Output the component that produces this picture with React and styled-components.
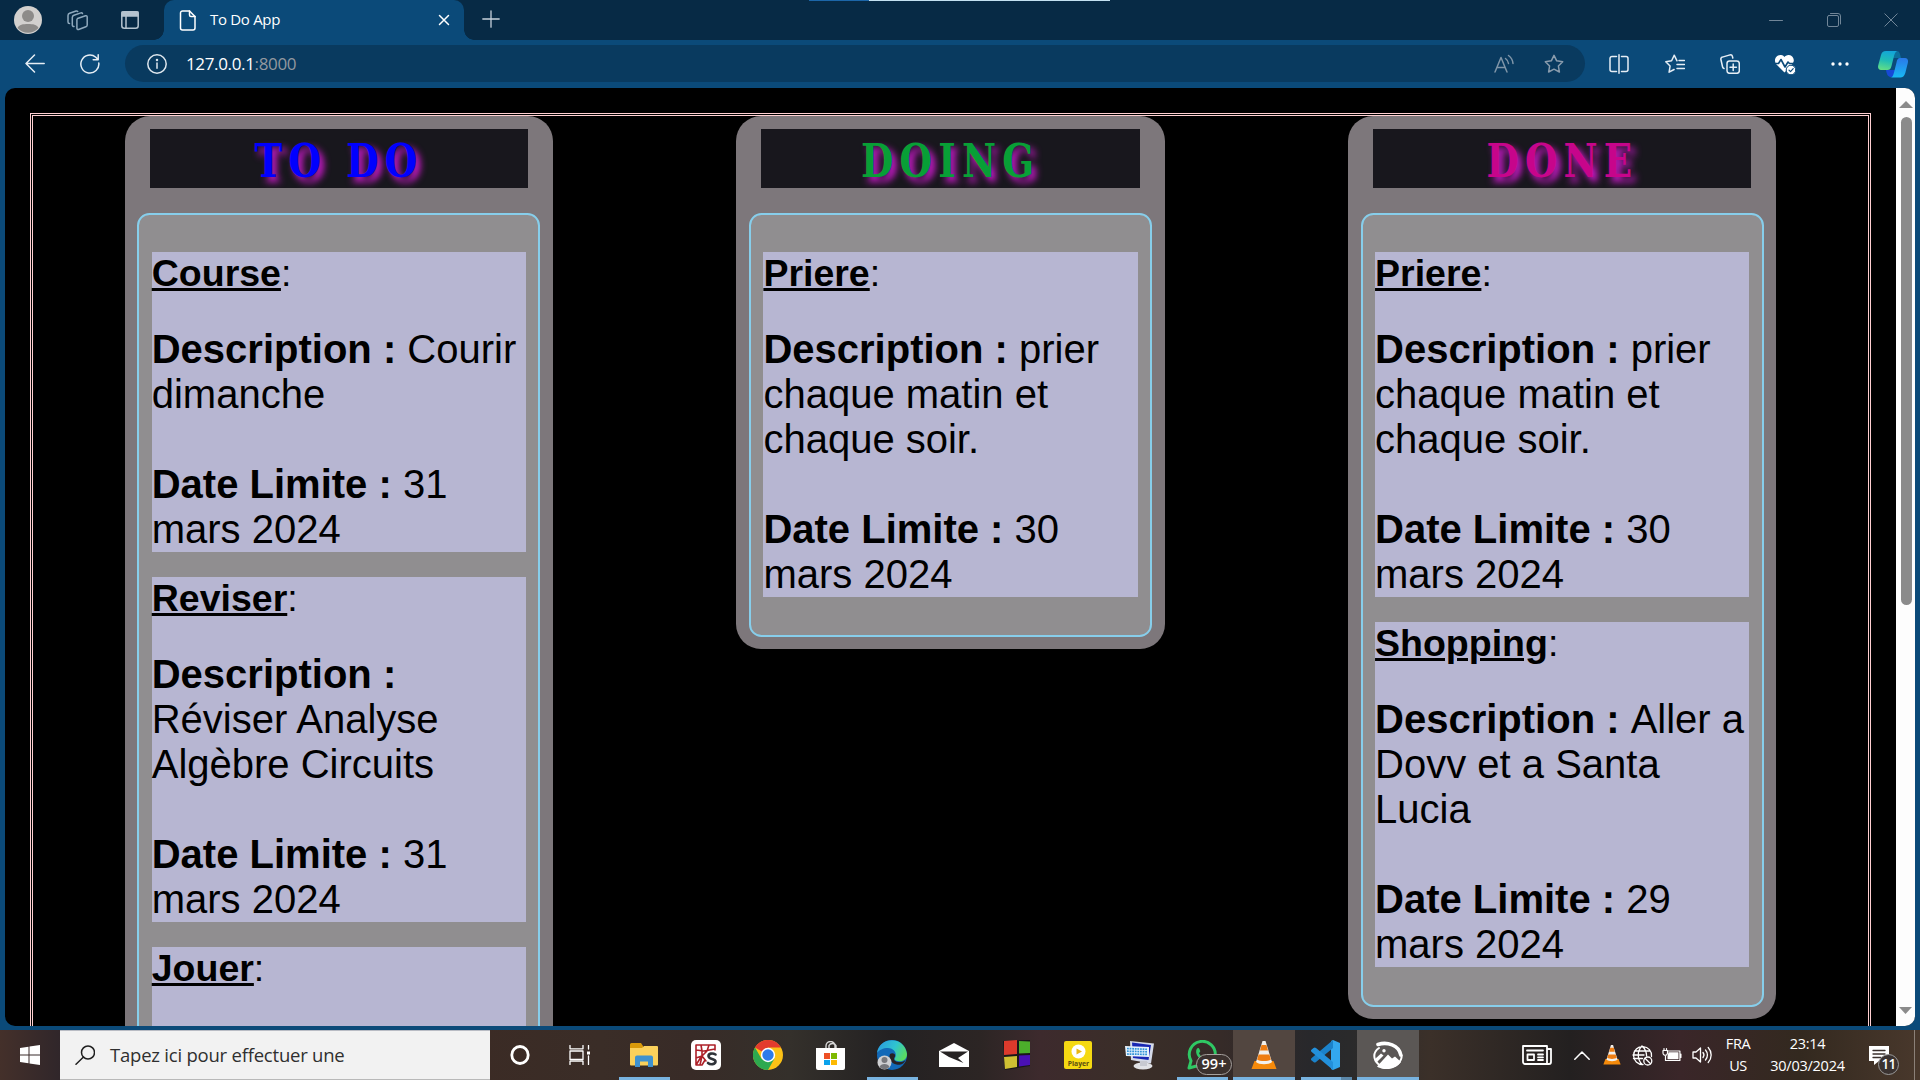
import React from "react";
import styled, { createGlobalStyle } from "styled-components";

const Global = createGlobalStyle`
  * { box-sizing: border-box; }
  body { margin: 0; background: #0b4a79; overflow: hidden; }
`;

const ui = `"Segoe UI", "Open Sans", "Noto Sans", sans-serif`;

const Screen = styled.div`
  width: 1920px;
  height: 1080px;
  display: flex;
  flex-direction: column;
  overflow: hidden;
  background: #0b4a79;
  font-family: ${ui};
`;

/* ---------- browser chrome ---------- */

const TabStrip = styled.header`
  height: 40px;
  flex: none;
  display: flex;
  position: relative;
  background: #072a45;
`;

const LoadLine = styled.div`
  position: absolute;
  top: 0;
  left: 809px;
  width: 301px;
  height: 1px;
  background: linear-gradient(90deg, #1c66a8 0 60px, #c4e2f2 60px);
`;

const StripTools = styled.div`
  width: 164px;
  padding-left: 14px;
  display: flex;
  align-items: center;
  gap: 25px;
`;

const StripIcon = styled.div`
  margin-left: ${(p) => p.$gap || 0}px;
`;

const Tab = styled.div`
  position: relative;
  width: 300px;
  height: 40px;
  padding: 0 14px 0 15px;
  display: flex;
  align-items: center;
  background: #0b4a79;
  border-radius: 10px 10px 0 0;
  color: #fff;
  &::before, &::after {
    content: "";
    position: absolute;
    bottom: 0;
    width: 10px;
    height: 10px;
  }
  &::before {
    left: -10px;
    background: radial-gradient(circle at 0 0, transparent 9.5px, #0b4a79 10px);
  }
  &::after {
    right: -10px;
    background: radial-gradient(circle at 100% 0, transparent 9.5px, #0b4a79 10px);
  }
`;

const TabTitle = styled.span`
  flex: 1;
  margin-left: 14px;
  padding-bottom: 2px;
  font-size: 15px;
  line-height: 20px;
  letter-spacing: -0.3px;
`;

const NewTab = styled.div`
  width: 54px;
  padding-bottom: 2px;
  display: flex;
  align-items: center;
  justify-content: center;
`;

const WindowButtons = styled.div`
  margin-left: auto;
  padding-bottom: 1px;
  display: flex;
`;

const WindowButton = styled.div`
  width: 57.5px;
  display: flex;
  align-items: center;
  justify-content: center;
`;

const Toolbar = styled.div`
  height: 48px;
  flex: none;
  display: flex;
  align-items: center;
  background: #0b4a79;
`;

const ToolSlot = styled.div`
  width: ${(p) => p.$w}px;
  padding-right: ${(p) => p.$pr || 0}px;
  flex: none;
  display: flex;
  align-items: center;
  justify-content: center;
`;

const AddressBar = styled.div`
  width: 1460px;
  height: 37px;
  margin: 0 6px 1px 10px;
  padding: 0 6px 0 22px;
  display: flex;
  align-items: center;
  border-radius: 19px;
  background: #093a5f;
`;

const Url = styled.div`
  flex: 1;
  margin-left: 19px;
  font-size: 17px;
  line-height: 24px;
  letter-spacing: -0.35px;
  color: #fff;
  span { color: #93989f; }
`;

/* ---------- page ---------- */

const Viewport = styled.main`
  height: 938px;
  flex: none;
  margin: 0 5px;
  display: flex;
  overflow: hidden;
  border-radius: 10px;
  background: #000;
`;

const Page = styled.div`
  width: 1891px;
  padding: 25px 25px 0;
`;

const Board = styled.div`
  display: flex;
  justify-content: space-around;
  align-items: flex-start;
  height: 1400px;
  border: 3px double #ffd0d2;
`;

const Column = styled.section`
  width: 428.2px;
  padding: 12.5px;
  border-radius: 25px;
  background: #7d777b;
`;

const Heading = styled.h1`
  height: 59px;
  margin: 0 12.5px 25px;
  padding-top: 2px;
  overflow: hidden;
  text-align: center;
  background: #18171d;
  font: bold 46.5px/59px "DejaVu Serif Condensed", "DejaVu Serif", serif;
  font-stretch: condensed;
  color: ${(p) => p.$color};
`;

const HeadingText = styled.span`
  display: inline-block;
  transform: scaleX(0.89);
  letter-spacing: 7px;
  text-shadow: 5px 5px 8px #d41ad4;
`;

const Tasks = styled.div`
  padding: 37.5px 12.5px;
  display: flex;
  flex-direction: column;
  gap: 25px;
  border: 2px solid #87ceeb;
  border-radius: 12.5px;
  background: #908e90;
`;

const Card = styled.article`
  min-height: ${(p) => p.$min || 0}px;
  background: #b7b6d2;
  color: #000;
  font-family: Arial, "Liberation Sans", sans-serif;
`;

const CardTitle = styled.div`
  margin-bottom: 32px;
  font-size: 37.5px;
  line-height: 43px;
`;

const Line = styled.p`
  margin: 0 0 ${(p) => (p.$last ? 0 : 45)}px;
  font-size: 40px;
  line-height: 45px;
`;

const ScrollBar = styled.div`
  width: 19px;
  padding: 13px 0 12px;
  display: flex;
  flex-direction: column;
  align-items: center;
  background: #fdfdfd;
`;

const Thumb = styled.div`
  width: 11px;
  height: 488px;
  margin: 9px 0 auto 1px;
  border-radius: 6px;
  background: #8b8b8b;
`;

/* ---------- taskbar ---------- */

const Taskbar = styled.footer`
  height: 50px;
  flex: none;
  margin-top: 4px;
  display: flex;
  background: linear-gradient(90deg, #44302a 0, #30262a 60px, #3b2b25 480px, #3a2d27 600px,
    #382b27 690px, #34302b 790px, #232122 890px, #2c2524 980px, #3d2a2d 1040px, #3a2e28 1130px,
    #362b28 1220px, #28282b 1310px, #2a2a2b 1350px, #3b3029 1430px, #232020 1570px,
    #3a2629 1680px, #33291f 1800px, #49382c 1920px);
`;

const Start = styled.div`
  width: 60px;
  display: flex;
  align-items: center;
  justify-content: center;
`;

const Search = styled.div`
  width: 430px;
  padding: 0 15px;
  display: flex;
  align-items: center;
  gap: 15px;
  border-top: 1px solid #b9bcc4;
  border-bottom: 1px solid #b9b9b9;
  background: #f2f2f2;
  color: #2f2f2f;
  font-size: 18.5px;
  letter-spacing: -0.22px;
  span { padding-bottom: 2px; }
`;

const Cell = styled.div`
  position: relative;
  width: ${(p) => p.$w || 62}px;
  padding-right: ${(p) => p.$pr || 0}px;
  display: flex;
  align-items: center;
  justify-content: center;
  background: ${(p) => p.$bg || "transparent"};
  &::after {
    content: "";
    position: absolute;
    bottom: 0;
    left: ${(p) => (p.$bg ? 0 : 6)}px;
    right: ${(p) => (p.$bg ? 0 : 5)}px;
    height: ${(p) => (p.$open ? 3 : 0)}px;
    background: ${(p) => (p.$stack ? "linear-gradient(90deg, #78b3e0 0 40px, #5b87a9 40px)" : "#78b3e0")};
  }
`;

const Count = styled.div`
  position: absolute;
  left: 25px;
  top: 24px;
  width: 36px;
  height: 21px;
  border: 1px solid #a5a09d;
  border-radius: 11px;
  background: #3b312e;
  color: #fff;
  font: 600 14.5px/18px ${ui};
  text-align: center;
`;

const Tray = styled.div`
  margin-left: auto;
  display: flex;
  color: #fff;
`;

const TraySlot = styled.div`
  position: relative;
  width: ${(p) => p.$w}px;
  padding-right: ${(p) => p.$pr || 0}px;
  display: flex;
  flex-direction: column;
  align-items: center;
  justify-content: center;
  font-size: 14.5px;
  line-height: 22px;
  letter-spacing: ${(p) => p.$ls || 0}px;
  white-space: nowrap;
`;

const Badge = styled.div`
  position: absolute;
  left: 22px;
  top: 24px;
  width: 21px;
  height: 21px;
  border: 1px solid #9a9a9a;
  border-radius: 50%;
  background: #3a3230;
  font: 600 13.5px/18px ${ui};
  text-align: center;
  letter-spacing: -0.8px;
`;

const ShowDesktop = styled.div`
  width: 6px;
  border-left: 1px solid #8b8078;
`;

/* ---------- drawings ---------- */

const Drawing = styled.svg`
  display: block;
  flex: none;
`;

const Ic = ({ w = 20, h = w, vb, c = "#e6eef5", s = 1.5, children }) => (
  <Drawing width={w} height={h} viewBox={vb || `0 0 ${w} ${h}`} fill="none" stroke={c} strokeWidth={s}
    strokeLinecap="round" strokeLinejoin="round">
    {children}
  </Drawing>
);

const Avatar = () => (
  <Ic w={28} s={0}>
    <circle cx="14" cy="14" r="14" fill="#d2d0ce" />
    <circle cx="14" cy="10" r="6" fill="#8d8b89" />
    <path d="M3.5 22C5 18.5 9 18 14 18s9 .5 10.500 4A14 14 0 0 1 3.500 22z" fill="#8d8b89" />
  </Ic>
);

const Cone = ({ w, h }) => (
  <Ic w={w} h={h} vb="0 0 26 28" s={0}>
    <path d="M3.500 20h19l3 8H.5z" fill="#f58a0b" />
    <path d="M11.500 0h3l6.500 21c-3 3-13 3-16 0z" fill="#f2f0ec" />
    <path d="M10.500 4h5l1.500 5.500H9z" fill="#ee7d12" />
    <path d="M7.600 13.500h10.800l1.500 5c-3 2-10.800 2-13.800 0z" fill="#ee7d12" />
  </Ic>
);

const UpArrow = () => <Ic w={14} h={7} s={0}><path d="M7 0l7 7H0z" fill="#8b8b8b" /></Ic>;
const DownArrow = () => <Ic w={13} h={7} s={0}><path d="M6.500 7L0 0h13z" fill="#8b8b8b" /></Ic>;

const starPath = "M10 1.300l2.700 5.500 6 .9-4.300 4.300 1 6L10 15.200 4.600 18l1-6L1.300 7.700l6-.9z";

/* ---------- data ---------- */

const columns = [
  { title: "TO DO", color: "#0000ff", tasks: [
    { name: "Course", text: "Courir dimanche", date: "31 mars 2024" },
    { name: "Reviser", text: "Réviser Analyse Algèbre Circuits", date: "31 mars 2024" },
    { name: "Jouer" },
  ] },
  { title: "DOING", color: "#089f36", tasks: [
    { name: "Priere", text: "prier chaque matin et chaque soir.", date: "30 mars 2024" },
  ] },
  { title: "DONE", color: "#c7058b", tasks: [
    { name: "Priere", text: "prier chaque matin et chaque soir.", date: "30 mars 2024" },
    { name: "Shopping", text: "Aller a Dovv et a Santa Lucia", date: "29 mars 2024" },
  ] },
];

const Task = ({ name, text, date }) => (
  <Card $min={text ? 0 : 300}>
    <CardTitle><b><u>{name}</u></b>:</CardTitle>
    {text && <Line><b>{"Description : "}</b>{text}</Line>}
    {date && <Line $last><b>{"Date Limite : "}</b>{date}</Line>}
  </Card>
);

const Chrome = () => (
  <>
    <TabStrip>
      <StripTools>
        <Avatar />
        <StripIcon>
          <Ic w={21} c="#8fa9bd">
            <path d="M10.500 8.500l8-2.800a1.300 1.300 0 0 1 1.700 1.200v8a2 2 0 0 1-1.300 1.900l-7.300 2.700a1.300 1.300 0 0 1-1.700-1.200v-8a2 2 0 0 1 .6-1.800z" />
            <path d="M7 16.500a1.500 1.500 0 0 1-1.700-1.500V7.500a2.500 2.500 0 0 1 1.600-2.200l7-2.400a1.400 1.400 0 0 1 1.600.6" />
            <path d="M2.500 13.500A1.500 1.500 0 0 1 1 12V5.500a2.500 2.500 0 0 1 1.600-2.200l6.500-2.300a1.400 1.400 0 0 1 1.600.5" />
          </Ic>
        </StripIcon>
        <StripIcon $gap={8}>
          <Ic w={18} c="#b4c3cf">
            <rect x=".8" y=".8" width="16.400" height="16.400" rx="2.500" />
            <path d="M1 1h16v4H1z" fill="#b4c3cf" />
            <path d="M5 5v12" />
          </Ic>
        </StripIcon>
      </StripTools>
      <Tab>
        <Ic w={17} h={21} c="#fff">
          <path d="M3.500 1h7L16 6.500V18a2 2 0 0 1-2 2H3.500a2 2 0 0 1-2-2V3a2 2 0 0 1 2-2z" />
          <path d="M10.500 1v4a1.500 1.500 0 0 0 1.500 1.500h4" />
        </Ic>
        <TabTitle>To Do App</TabTitle>
        <Ic w={12} c="#fff"><path d="M1.500 1.500l9 9M10.500 1.500l-9 9" /></Ic>
      </Tab>
      <NewTab><Ic w={18} c="#c7d2dc" s={1.300}><path d="M9 .8v16.400M.8 9h16.400" /></Ic></NewTab>
      <LoadLine />
      <WindowButtons>
        <WindowButton><Ic w={14} c="#718698" s={1}><path d="M.5 7.500h13" /></Ic></WindowButton>
        <WindowButton>
          <Ic w={14} c="#718698" s={1}>
            <rect x=".5" y="2.500" width="11" height="11" rx="1.500" />
            <path d="M3.500.5h7.500a2.500 2.500 0 0 1 2.500 2.500v8" />
          </Ic>
        </WindowButton>
        <WindowButton><Ic w={14} c="#718698" s={1}><path d="M.8.8l12.400 12.400M13.200.8L.8 13.200" /></Ic></WindowButton>
      </WindowButtons>
    </TabStrip>
    <Toolbar>
      <ToolSlot $w={70}><Ic w={20}><path d="M19.200 9.500H1M9.500 1L1 9.500 9.500 18" /></Ic></ToolSlot>
      <ToolSlot $w={45} $pr={5}>
        <Ic w={20}><path d="M18.800 9a9 9 0 1 1-3-5.700l1.700 1.800M18.200.8v5h-5" /></Ic>
      </ToolSlot>
      <AddressBar>
        <Ic w={20} c="#dfe7ee">
          <circle cx="10" cy="10" r="9.200" /><path d="M10 9v5.300" /><circle cx="10" cy="6" r=".5" fill="#fff" />
        </Ic>
        <Url>127.0.0.1<span>:8000</span></Url>
        <ToolSlot $w={50}>
          <Ic w={20} c="#7f95a8">
            <path d="M1 18L7 3.500 13 18M3 13.500h8M11.500 4.500a7 7 0 0 1 3 5M14.500 1.500a11 11 0 0 1 4.500 8" />
          </Ic>
        </ToolSlot>
        <ToolSlot $w={50}><Ic w={20} c="#8a9cad"><path d={starPath} /></Ic></ToolSlot>
      </AddressBar>
      <ToolSlot $w={56}>
        <Ic w={20}><path d="M7.500 2.500H3a2 2 0 0 0-2 2v11a2 2 0 0 0 2 2h4.500M12.500 2.500H17a2 2 0 0 1 2 2v11a2 2 0 0 1-2 2h-4.500M10 .8v18.400" /></Ic>
      </ToolSlot>
      <ToolSlot $w={55}>
        <Ic w={20}><path d="M12 6.800L9.200 1.200 6.600 6.800l-5.800.9 4.300 4.300-1 6.200 5-2.700M14 6.500h5.500M12 10.500h7.500M12 14.500h7.500" /></Ic>
      </ToolSlot>
      <ToolSlot $w={55}>
        <Ic w={20}>
          <rect x="7" y="7" width="12.300" height="12.300" rx="2.500" />
          <path d="M13.200 10v6.400M10 13.200h6.400M4 14.500a2 2 0 0 1-1.400-1.500L.9 5.500a2 2 0 0 1 1.500-2.400L10 .9a2 2 0 0 1 2.400 1.400l.4 1.700" />
        </Ic>
      </ToolSlot>
      <ToolSlot $w={55}>
        <Ic w={22} h={21} c="#fff" s={0}>
          <path d="M10.500 18.500L2 10C-1 5 3 .5 7 1c2 0 3 1.500 3.500 2C11 2 13 .8 15 1c4 .5 6.500 5 3.500 9z" fill="#fff" />
          <path d="M0 9.500h4.500L7 5.500l4 7.500 3-5 1.500 1.500H21" stroke="#0b4a79" strokeWidth="1.600" />
          <circle cx="17" cy="16" r="4.800" fill="#fff" stroke="#0b4a79" strokeWidth="1" />
          <path d="M15 16.200l1.500 1.500 2.700-3" stroke="#0b4a79" strokeWidth="1.200" />
        </Ic>
      </ToolSlot>
      <ToolSlot $w={55}>
        <Ic w={18} h={4} s={0}><path d="M2 2h.01M9 2h.01M16 2h.01" stroke="#fff" strokeWidth="3.400" /></Ic>
      </ToolSlot>
      <ToolSlot $w={51}>
        <Ic w={30} h={27} s={0}>
          <defs>
            <linearGradient id="cpa" x1=".5" y1="0" x2=".3" y2="1"><stop offset="0" stopColor="#13a5d8" /><stop offset=".5" stopColor="#20bdb5" /><stop offset="1" stopColor="#63de86" /></linearGradient>
            <linearGradient id="cpb" x1=".5" y1="0" x2=".5" y2="1"><stop offset="0" stopColor="#2a78e8" /><stop offset="1" stopColor="#19b9f3" /></linearGradient>
          </defs>
          <path d="M8 19h10l-2 7h-3c-3 0-4-2-5-7z" fill="#1749d6" />
          <path d="M15 0h4c2.500 0 3 3 4 7h-9z" fill="#0c6f9c" />
          <path d="M8 0h11c-2 1-2.500 3-3.500 7l-2 8c-.8 3-2 4-4 4H3c-2.500 0-3.500-2-2.700-5L3 4C4 1 5 0 8 0z" fill="url(#cpa)" />
          <path d="M22 7h5c2.500 0 3.500 2 2.800 5l-2.500 10c-1 3-2.500 4.500-5 4.500H12c2.500 0 3.200-2 4-5l2.500-10C19 8.500 20 7 22 7z" fill="url(#cpb)" />
        </Ic>
      </ToolSlot>
    </Toolbar>
  </>
);

const Apps = () => (
  <>
    <Cell $w={60}><Ic w={20} h={20} c="#fff" s={2.800}><ellipse cx="10" cy="10" rx="8.200" ry="8.500" /></Ic></Cell>
    <Cell $w={63} $pr={3}>
      <Ic w={22} h={20} c="#fff" s={1.300}>
        <path d="M1 .5v3.300h13V.5M1 19.500v-3.300h13v3.300M1 6h13v8.500H1zM19.500.5V4M19.500 11v8.500" />
        <path d="M18 6.500h3v3h-3z" fill="#fff" stroke="none" />
      </Ic>
    </Cell>
    <Cell $open>
      <Ic w={28} h={24} s={0}>
        <path d="M0 1.500A1.500 1.500 0 0 1 1.500 0H11l2 3v5H0z" fill="#d99a0a" />
        <path d="M0 5h12l2-2h13a1 1 0 0 1 1 1v17.500a1 1 0 0 1-1 1H1a1 1 0 0 1-1-1z" fill="#fbd15b" />
        <path d="M5 24v-9.500a2 2 0 0 1 2-2h14a2 2 0 0 1 2 2V24h-5v-5.500h-8V24z" fill="#3f92cf" />
      </Ic>
    </Cell>
    <Cell>
      <Ic w={30} s={1.600} c="#ad2028">
        <rect width="30" height="30" rx="5" fill="#fff" stroke="none" />
        <path d="M5 5h19v5M5 5v20h6l3-5M5 10l8 1 11-2M5 18l6-2 5-5 2-6M10 5l1 6v5l-2 9M11 16l4 5M5 25l5-8" />
        <path d="M24.500 14.500c-3-1.800-7-1-7 1.500 0 3.800 7 2 7 5.500 0 3-5 3.500-7.500 1.500" stroke="#30343a" strokeWidth="2.600" />
      </Ic>
    </Cell>
    <Cell>
      <Ic w={30} s={0}>
        <circle cx="15" cy="15" r="15" fill="#fbc116" />
        <path d="M15 15L2 7.500A15 15 0 0 1 28 7.500H15z" fill="#e33b2e" />
        <path d="M2 7.500A15 15 0 0 0 15 30l6.500-11.500L15 15l-6.500 3.800z" fill="#2da94f" />
        <circle cx="15" cy="15" r="7.200" fill="#fff" /><circle cx="15" cy="15" r="5.700" fill="#2d7bea" />
      </Ic>
    </Cell>
    <Cell>
      <Ic w={29} h={29} s={0}>
        <path d="M10 8V5a4.500 4.500 0 0 1 9 0v3M13 7V4.500a4 4 0 0 1 7 0V7" stroke="#d7d7d7" strokeWidth="1.400" />
        <path d="M0 7h29v20a2 2 0 0 1-2 2H2a2 2 0 0 1-2-2z" fill="#fff" />
        <path d="M8 12h6v6H8z" fill="#ee5024" /><path d="M15 12h6v6h-6z" fill="#7db900" />
        <path d="M8 19h6v5H8z" fill="#0aa2ec" /><path d="M15 19h6v5h-6z" fill="#fdb902" />
      </Ic>
    </Cell>
    <Cell $open>
      <Ic w={30} s={0}>
        <defs>
          <linearGradient id="eg" x1="0" x2="1" y1=".2" y2=".6"><stop offset="0" stopColor="#2b9be0" /><stop offset=".55" stopColor="#2fc4d0" /><stop offset="1" stopColor="#5bdc5e" /></linearGradient>
        </defs>
        <circle cx="15" cy="15" r="15" fill="#1269b8" />
        <path d="M0 13C2-3 27-5 30 14c0 6-5 8-9 7-4-.5-4-2-2.500-4C20 12 16 8 11 8 6 8 2 10 0 13z" fill="url(#eg)" />
        <path d="M13 14c2-1.500 6-.5 5 2.500-2 3-.5 5 3 5.500 3 .3 5 0 7.500-2-2 5-6 5-9 4.500-5-.8-8.500-6-6.500-10.500z" fill="#272224" />
        <circle cx="7.500" cy="22.500" r="7" fill="#cfd0d2" />
        <circle cx="7.500" cy="20" r="3" fill="#77787c" /><path d="M2.500 27c1-4 9-4 10 0-3 3-7 3-10 0z" fill="#77787c" />
      </Ic>
    </Cell>
    <Cell>
      <Ic w={30} h={24} s={0}>
        <path d="M0 8L15 0l15 8v16H0z" fill="#fff" /><path d="M1 8.500h28l-10 6.500 5.500 5L10 14z" fill="#262223" />
      </Ic>
    </Cell>
    <Cell>
      <Ic w={27} h={30} s={0}>
        <path d="M0 1L27 0v26L2 30z" fill="#19171a" />
        <path d="M1 1l13-1v14L1 15z" fill="#dc3a2c" /><path d="M16 1l11 .5V13l-11 .5z" fill="#4cae2b" />
        <path d="M1 17l13-1v11L2 29z" fill="#cfc033" /><path d="M16 15.500L27 15v10l-11 1.500z" fill="#4a10b4" />
      </Ic>
    </Cell>
    <Cell $pr={1}>
      <Ic w={28} s={0}>
        <rect width="28" height="28" rx="2" fill="#f5d912" />
        <circle cx="14.500" cy="10.500" r="7" fill="#fff" /><path d="M12.500 7.500l5.500 3-5.500 3z" fill="#e9b713" />
        <text x="14.500" y="24.500" textAnchor="middle" fontSize="6.800" fontWeight="700" fill="#5a4b10" fontFamily="Open Sans, sans-serif">Player</text>
      </Ic>
    </Cell>
    <Cell>
      <Ic w={30} h={29} s={0}>
        <path d="M5 0l24 2.500-3 20L6 19z" fill="#d5dae8" /><path d="M7 1.500l19 2.500-2.500 15L8 17z" fill="#1827b3" />
        <ellipse cx="18" cy="25" rx="9.500" ry="3.500" fill="#e1e2e6" /><path d="M15 20h7v5h-7z" fill="#c7c9d1" />
        <path d="M0 5l24 1v10L1 15z" fill="#e7f3fc" />
        <path d="M2 7.500l20 .8M2 10.200l20 .6M2 13l20 .4" stroke="#3192d8" strokeWidth="1.700" strokeDasharray="1.800 .8" strokeLinecap="butt" />
      </Ic>
    </Cell>
    <Cell $open>
      <Ic w={30} c="#2fc864" s={3}>
        <path d="M2 28l2-7.200A13 13 0 1 1 9.500 26z" />
        <path d="M10 8.500c1-1 2-.5 2.500.8l.8 2-1.300 2c1.500 3 3.500 4 5 4.700l2-2 3.200 1.700c.5 3-3 4-5 3.500C12 20 7 13 10 8.500z" fill="#2fc864" stroke="none" />
      </Ic>
      <Count>99+</Count>
    </Cell>
    <Cell $open $bg="#524640"><Cone w={26} h={28} /></Cell>
    <Cell $open $stack>
      <Ic w={30} s={0}>
        <path d="M22 0l7 3v24l-7 3-2-1V1z" fill="#33a7ee" />
        <path d="M22 0v8L5 22c-1 .7-1.500.7-2.500 0L.7 20.500c-1-.8-1-1.500 0-2.400z" fill="#1b82ca" />
        <path d="M22 30v-8L5 8c-1-.7-1.500-.7-2.500 0L.7 9.500c-1 .8-1 1.500 0 2.400z" fill="#2390db" />
      </Ic>
    </Cell>
    <Cell $open $bg="#5b5755">
      <Ic w={30} h={28} s={0}>
        <path d="M6 7C3 9 1.300 11.500 1.300 15c0 6 6 11.500 13.700 11.500S28.700 21 28.700 14.500" stroke="#fff" strokeWidth="2" />
        <path d="M5 3.500C14 .5 26 4 27.800 14" stroke="#fff" strokeWidth="3.600" />
        <path d="M4 25.500L15 13.500l4 4 3-2 6 5.500c-6 8-17 9-24 4.500z" fill="#fff" />
        <path d="M2 18l6-5.500 2.500 2L4 21z" fill="#fff" />
        <circle cx="11" cy="9.800" r="1.700" fill="#fff" />
      </Ic>
    </Cell>
  </>
);

const SystemTray = () => (
  <Tray>
    <TraySlot $w={54}>
      <Ic w={30} h={20} c="#fff" s={1.800}>
        <path d="M1 1h24v18H3a2 2 0 0 1-2-2zM25 4h4v13a2 2 0 0 1-2 2h-3M5 5.500h16M5.500 9.500h6.500v5.500H5.500zM16 9.500h5M16 12.300h5M16 15h5" />
      </Ic>
    </TraySlot>
    <TraySlot $w={36}><Ic w={16} h={9} c="#fff" s={1.500}><path d="M.8 8.300L8 1l7.200 7.300" /></Ic></TraySlot>
    <TraySlot $w={26} $pr={2}><Cone w={18} h={19.500} /></TraySlot>
    <TraySlot $w={32}>
      <Ic w={21} c="#fff" s={1.300}>
        <path d="M11 19.500a9 9 0 1 1 8.500-8M10 1c-5 5-5 13 0 18.500M10 1c3.500 3 4.500 6 4.600 10M2.500 6h15M1.500 13.500h9M1 10h11" />
        <circle cx="15.800" cy="16" r="4" /><path d="M13 13.300l5.600 5.400" />
      </Ic>
    </TraySlot>
    <TraySlot $w={29} $pr={2}>
      <Ic w={20} h={14} c="#fff" s={1.200}>
        <path d="M5.500 3h12.400v9.500H3.500V8M18.900 6v3.500" />
        <path d="M6.500 4.300h10v7h-11V8z" fill="#fff" stroke="none" />
        <path d="M1 2.500h4.500V5a2.200 2.200 0 0 1-4.500 0zM2 2.500V.6M4.500 2.500V.6" />
      </Ic>
    </TraySlot>
    <TraySlot $w={31} $pr={1}>
      <Ic w={20} h={18} c="#fff" s={1.300}>
        <path d="M1 6h3l4.500-4v14L4 12H1zM11 6.500a4 4 0 0 1 0 5M13.500 4a7.500 7.500 0 0 1 0 10M16.200 1.500a11 11 0 0 1 0 15" />
      </Ic>
    </TraySlot>
    <TraySlot $w={42} $pr={2} $ls={-0.400}><span>FRA</span><span>US</span></TraySlot>
    <TraySlot $w={96} $pr={1} $ls={-0.250}><span>23:14</span><span>30/03/2024</span></TraySlot>
    <TraySlot $w={58} $pr={12}>
      <Ic w={20} h={19} s={0}>
        <path d="M0 0h20v15H10l-5 4v-4H0z" fill="#fff" />
        <path d="M4 4.500h12M4 8h12M4 11.500h8" stroke="#3a302c" strokeWidth="1.300" />
      </Ic>
      <Badge>11</Badge>
    </TraySlot>
    <ShowDesktop />
  </Tray>
);

export default function App() {
  return (
    <Screen>
      <Global />
      <Chrome />
      <Viewport>
        <Page>
          <Board>
            {columns.map((c) => (
              <Column key={c.title}>
                <Heading $color={c.color}><HeadingText>{c.title}</HeadingText></Heading>
                <Tasks>{c.tasks.map((t) => <Task key={t.name} {...t} />)}</Tasks>
              </Column>
            ))}
          </Board>
        </Page>
        <ScrollBar><UpArrow /><Thumb /><DownArrow /></ScrollBar>
      </Viewport>
      <Taskbar>
        <Start>
          <Ic w={20} s={0}><path d="M0 3l8.500-1.300v7.800H0zM9.500 1.500L20 0v9.500H9.500zM0 10.500h8.500v7.800L0 17zM9.500 10.500H20V20L9.500 18.500z" fill="#fff" /></Ic>
        </Start>
        <Search>
          <Ic w={20} c="#1f1f1f"><circle cx="13" cy="7.500" r="6.500" /><path d="M8.500 12L1 19.300" /></Ic>
          <span>Tapez ici pour effectuer une</span>
        </Search>
        <Apps />
        <SystemTray />
      </Taskbar>
    </Screen>
  );
}
